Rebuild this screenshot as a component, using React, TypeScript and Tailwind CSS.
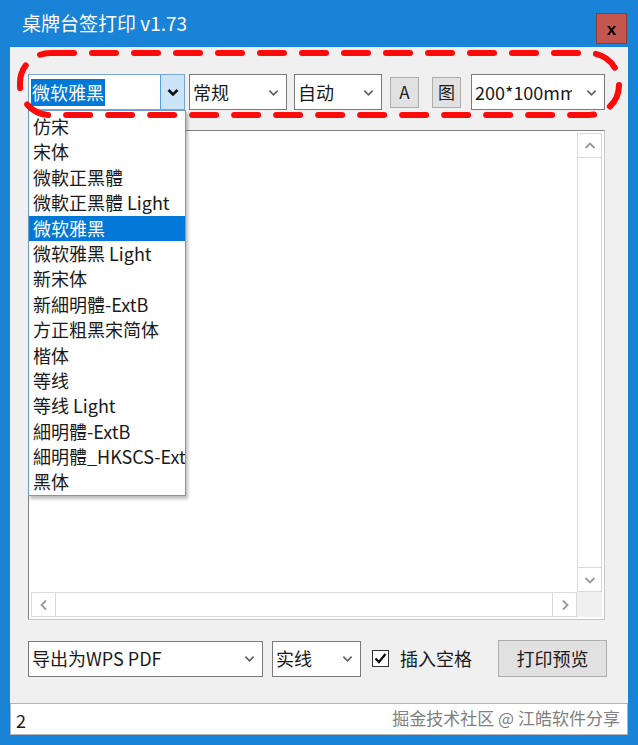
import React from 'react';

const fontCls = "font-['Noto_Sans_CJK_SC','Noto_Sans',sans-serif]";

const fonts = [
  '仿宋',
  '宋体',
  '微軟正黑體',
  '微軟正黑體 Light',
  '微软雅黑',
  '微软雅黑 Light',
  '新宋体',
  '新細明體-ExtB',
  '方正粗黑宋简体',
  '楷体',
  '等线',
  '等线 Light',
  '細明體-ExtB',
  '細明體_HKSCS-Ext',
  '黑体',
];

const Chevron: React.FC<{ dir?: 'down' | 'up' | 'left' | 'right'; color?: string; width?: number; bold?: boolean }> = ({
  dir = 'down',
  color = '#606060',
  width = 11,
  bold = false,
}) => {
  const rot = { down: 0, up: 180, left: 90, right: -90 }[dir];
  return (
    <svg width={width} height={width} viewBox="0 0 12 12" style={{ transform: `rotate(${rot}deg)` }}>
      <path d="M1.5 4 L6 8.5 L10.5 4" fill="none" stroke={color} strokeWidth={bold ? 2.6 : 1.8} />
    </svg>
  );
};

const Combo: React.FC<{ text: string; width: string; textWidth?: string }> = ({ text, width, textWidth }) => (
  <div className={`${width} h-[36px] bg-white border border-[#7a7a7a] flex items-center pl-[3px] pr-[7px]`}>
    <div className="flex-1">
      <div className={`overflow-hidden whitespace-nowrap text-[18px] text-[#1a1a1a] ${textWidth ?? ''}`}>{text}</div>
    </div>
    <Chevron />
  </div>
);

const SmallButton: React.FC<{ label: string }> = ({ label }) => (
  <div className="w-[29px] h-[31px] bg-[#e1e1e1] border border-[#adadad] flex items-center justify-center text-[17px] text-[#1a1a1a]">
    {label}
  </div>
);

const App: React.FC = () => {
  return (
    <div className={`relative w-[638px] h-[745px] bg-[#1883d7] overflow-hidden ${fontCls}`}>
      {/* title bar */}
      <div className="h-[47px] flex items-center pl-[22px] pr-[11px]">
        <span className="flex-1 text-white text-[19px] leading-none pb-[3px]">桌牌台签打印 v1.73</span>
        <div className="w-[31px] h-[31px] mt-[10px] bg-[#c4564f] border border-[#8e3b36] flex items-center justify-center text-[17px] font-bold text-black leading-none pt-[2px] font-['Liberation_Sans',sans-serif]">
          x
        </div>
      </div>

      {/* client area */}
      <div className="relative mx-[10px] h-[688px] bg-[#f0f0f0] flex flex-col">
        {/* toolbar */}
        <div className="mt-[27px] ml-[18px] flex items-center h-[36px]">
          <div className="w-[157px] h-[36px] bg-white border border-[#7aa7d2] flex">
            <div className="flex-1 flex items-center pl-[2px]">
              <span className="bg-[#0078d7] text-white text-[18px] leading-[27px] px-[1px]">微软雅黑</span>
            </div>
            <div className="w-[24px] bg-[#cce4f7] border-l border-[#569de5] flex items-center justify-center">
              <Chevron color="#111" bold width={12} />
            </div>
          </div>
          <div className="ml-[4px]">
            <Combo text="常规" width="w-[98px]" />
          </div>
          <div className="ml-[7px]">
            <Combo text="自动" width="w-[88px]" />
          </div>
          <div className="ml-[8px]">
            <SmallButton label="A" />
          </div>
          <div className="ml-[13px]">
            <SmallButton label="图" />
          </div>
          <div className="ml-[10px]">
            <Combo text="200*100mm" width="w-[134px]" textWidth="w-[97px]" />
          </div>
        </div>

        {/* text area */}
        <div className="mt-[20px] ml-[18px] w-[577px] h-[490px] bg-white border border-[#828282] border-r-[#c8c8c8] border-b-[#c8c8c8] p-[2px] flex flex-col">
          <div className="flex-1 flex">
            <div className="flex-1" />
            <div className="w-[25px] border border-[#dadada] flex flex-col">
              <div className="h-[24px] border-b border-[#dadada] flex items-center justify-center">
                <Chevron dir="up" color="#9a9a9a" width={12} />
              </div>
              <div className="flex-1" />
              <div className="h-[24px] border-t border-[#dadada] flex items-center justify-center">
                <Chevron dir="down" color="#9a9a9a" width={12} />
              </div>
            </div>
          </div>
          <div className="h-[25px] flex">
            <div className="flex-1 border border-[#dadada] flex">
              <div className="w-[24px] border-r border-[#dadada] flex items-center justify-center">
                <Chevron dir="left" color="#9a9a9a" width={12} />
              </div>
              <div className="flex-1" />
              <div className="w-[24px] border-l border-[#dadada] flex items-center justify-center">
                <Chevron dir="right" color="#9a9a9a" width={12} />
              </div>
            </div>
            <div className="w-[25px] bg-[#f0f0f0]" />
          </div>
        </div>

        {/* bottom controls */}
        <div className="mt-[20px] ml-[18px] flex items-center h-[37px]">
          <Combo text="导出为WPS PDF" width="w-[235px]" />
          <div className="ml-[9px]">
            <Combo text="实线" width="w-[89px]" />
          </div>
          <div className="ml-[11px] w-[17px] h-[17px] bg-white border border-[#333] flex items-center justify-center">
            <svg width="13" height="13" viewBox="0 0 13 13">
              <path d="M1.5 6.5 L5 10 L11.5 2" fill="none" stroke="#111" strokeWidth="2.4" />
            </svg>
          </div>
          <span className="ml-[11px] text-[18px] text-[#1a1a1a]">插入空格</span>
          <div className="ml-[26px] w-[109px] h-[37px] bg-[#e1e1e1] border border-[#adadad] flex items-center justify-center text-[18px] text-[#1a1a1a]">
            打印预览
          </div>
        </div>

        <div className="flex-1" />

        {/* status bar */}
        <div className="h-[32px] bg-white border border-[#b4b4b4] flex items-center pl-[5px] pr-[7px]">
          <span className="flex-1 text-[18px] text-[#1a1a1a] pt-[3px]">2</span>
          <span className="text-[17px] text-[#808080] pb-[2px]">掘金技术社区 @ 江皓软件分享</span>
        </div>

        {/* open font dropdown list */}
        <div className="absolute left-[18px] top-[63px] w-[158px] h-[386px] bg-white border border-[#6b9ccc] shadow-[2px_3px_3px_rgba(0,0,0,0.25)] pt-[3px] overflow-hidden">
          {fonts.map((f) => (
            <div
              key={f}
              className={`h-[25.4px] leading-[25.4px] pl-[4px] text-[18px] whitespace-nowrap ${
                f === '微软雅黑' ? 'bg-[#0078d7] text-white' : 'text-[#1a1a1a]'
              }`}
            >
              {f}
            </div>
          ))}
        </div>
      </div>

      {/* red dashed annotation */}
      <svg className="absolute left-0 top-0 pointer-events-none" width="638" height="130">
        <rect
          x="20"
          y="53"
          width="599"
          height="62"
          rx="30"
          ry="30"
          fill="none"
          stroke="#ff0a0a"
          strokeWidth="6"
          strokeDasharray="24 18"
          strokeLinecap="round"
        />
      </svg>
    </div>
  );
};

export default App;
